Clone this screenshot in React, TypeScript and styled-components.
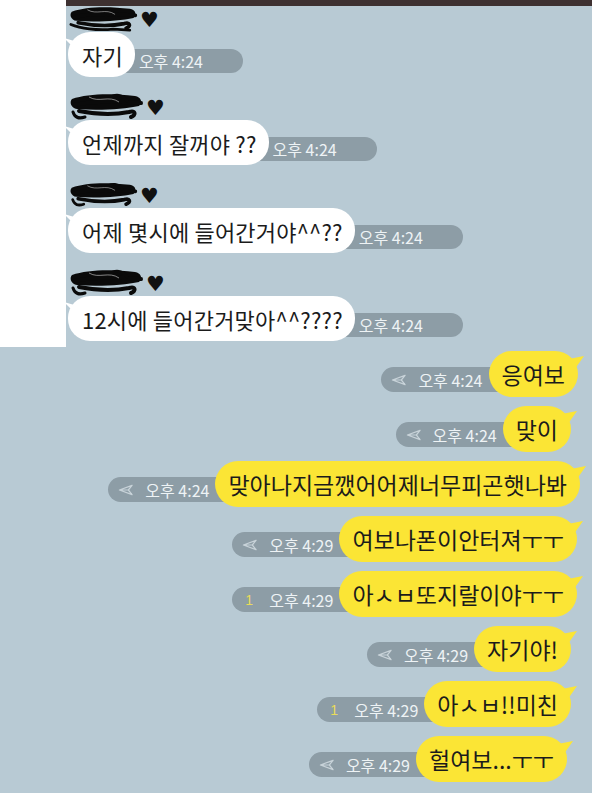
import React from 'react';
import styled, { createGlobalStyle } from 'styled-components';

const GlobalStyle = createGlobalStyle`
  html, body {
    margin: 0;
    padding: 0;
    background: #b8cad4;
  }
  * {
    box-sizing: border-box;
  }
`;

const Screen = styled.div`
  width: 592px;
  height: 793px;
  overflow: hidden;
  background: #b8cad4;
  font-family: 'Noto Sans CJK KR', 'Noto Sans', sans-serif;
  color: #1b1b1b;
`;

const TopArea = styled.div`
  display: flex;
  height: 347px;
`;

const WhiteStrip = styled.div`
  width: 66px;
  flex-shrink: 0;
  background: #fff;
`;

const ReceivedColumn = styled.div`
  flex: 1;
  display: flex;
  flex-direction: column;
`;

const TopBar = styled.div`
  height: 6px;
  background: #3e3131;
`;

const ReceivedList = styled.div`
  display: flex;
  flex-direction: column;
  gap: 17px;
`;

const Group = styled.div`
  display: flex;
  flex-direction: column;
`;

const NameRow = styled.div`
  height: 26px;
  display: flex;
  align-items: center;
  padding-left: 3px;
  gap: 1px;
`;

const Heart = styled.span`
  font-family: 'DejaVu Sans', sans-serif;
  font-size: 21px;
  line-height: 1;
  color: #111;
  margin-top: 2px;
`;

const ReceivedRow = styled.div`
  display: flex;
  align-items: flex-end;
  padding-left: 2px;
`;

const WhiteBubble = styled.div`
  position: relative;
  z-index: 2;
  height: 45px;
  display: flex;
  align-items: center;
  padding: 0 12px 0 14px;
  background: #fff;
  border-radius: 22px;
  font-size: 22px;
  letter-spacing: 0.2px;
  white-space: nowrap;

  &::before {
    content: '';
    position: absolute;
    left: -4px;
    top: 6px;
    width: 12px;
    height: 12px;
    background: #fff;
    clip-path: polygon(0 0, 100% 30%, 100% 100%);
  }
`;

const ReceivedTime = styled.div`
  position: relative;
  z-index: 1;
  height: 24px;
  margin: 0 0 4px -22px;
  padding: 0 40px 0 26px;
  display: flex;
  align-items: center;
  border-radius: 12px;
  background: #8d9da6;
  color: #eef3f5;
  font-size: 16px;
  white-space: nowrap;
`;

const SentList = styled.div`
  display: flex;
  flex-direction: column;
  gap: 9px;
  padding-top: 4px;
`;

const SentRow = styled.div<{ $inset: number }>`
  display: flex;
  justify-content: flex-end;
  align-items: flex-end;
  padding-right: ${(p) => p.$inset}px;
`;

const YellowBubble = styled.div`
  position: relative;
  z-index: 2;
  height: 46px;
  display: flex;
  align-items: center;
  padding: 0 13px;
  background: #fbe535;
  border-radius: 23px;
  font-size: 23px;
  white-space: nowrap;

  &::after {
    content: '';
    position: absolute;
    right: -6px;
    top: 5px;
    width: 14px;
    height: 14px;
    background: #fbe535;
    clip-path: polygon(0 20%, 100% 0, 30% 100%);
  }
`;

const SentTime = styled.div`
  position: relative;
  z-index: 1;
  height: 25px;
  margin: 0 -25px 5px 0;
  padding: 0 31px 0 10px;
  display: flex;
  align-items: center;
  gap: 12px;
  border-radius: 13px;
  background: #8d9da6;
  color: #eef3f5;
  font-size: 16px;
  white-space: nowrap;
`;

const Unread = styled.span`
  width: 15px;
  padding-left: 3px;
  color: #e9dc5a;
  font-family: 'Liberation Sans', sans-serif;
  font-size: 14px;
`;

const Scribble: React.FC<{ seed: number }> = ({ seed }) => {
  const w = 70 + (seed % 2) * 6;
  return (
    <svg width={w} height="28" viewBox="0 0 76 28" style={{ overflow: 'visible' }}>
      <path
        d="M3 6 C 18 1, 40 0, 66 3 C 72 4, 74 9, 70 13 C 55 16, 30 18, 8 16 C 2 15, 0 9, 3 6 Z"
        fill="#0a0a0a"
      />
      <path
        d="M6 12 C 20 8, 45 8, 72 10 M10 18 C 25 21, 45 22, 60 19 C 66 17, 68 22, 62 24"
        stroke="#0a0a0a"
        strokeWidth="4"
        fill="none"
        strokeLinecap="round"
      />
      <path
        d={seed === 0 ? 'M2 20 C 12 24, 30 27, 48 25 L 66 26' : 'M4 19 C 6 25, 10 26, 16 24 M40 6 C 46 0, 54 2, 58 8'}
        stroke="#0a0a0a"
        strokeWidth="3"
        fill="none"
        strokeLinecap="round"
      />
      <path d="M20 4 C 30 10, 40 2, 50 9" stroke="#fff" strokeWidth="1" fill="none" opacity="0.5" />
    </svg>
  );
};

const SendIcon: React.FC = () => (
  <svg width="15" height="12" viewBox="0 0 16 12">
    <path
      d="M15 1 L1.5 6 L15 11 L11 6 Z M1.5 6 L11 6"
      stroke="#c8d3d9"
      strokeWidth="1.3"
      fill="none"
      strokeLinejoin="round"
    />
  </svg>
);

const RECEIVED = [
  { text: '자기', time: '오후 4:24' },
  { text: '언제까지 잘꺼야 ??', time: '오후 4:24' },
  { text: '어제 몇시에 들어간거야^^??', time: '오후 4:24' },
  { text: '12시에 들어간거맞아^^????', time: '오후 4:24' },
];

const SENT = [
  { text: '응여보', time: '오후 4:24', unread: false, inset: 14 },
  { text: '맞이', time: '오후 4:24', unread: false, inset: 21 },
  { text: '맞아나지금깼어어제너무피곤햇나봐', time: '오후 4:24', unread: false, inset: 12 },
  { text: '여보나폰이안터져ㅜㅜ', time: '오후 4:29', unread: false, inset: 15 },
  { text: '아ㅅㅂ또지랄이야ㅜㅜ', time: '오후 4:29', unread: true, inset: 15 },
  { text: '자기야!', time: '오후 4:29', unread: false, inset: 21 },
  { text: '아ㅅㅂ!!미친', time: '오후 4:29', unread: true, inset: 21 },
  { text: '헐여보...ㅜㅜ', time: '오후 4:29', unread: false, inset: 25 },
];

const App: React.FC = () => {
  return (
    <Screen>
      <GlobalStyle />
      <TopArea>
        <WhiteStrip />
        <ReceivedColumn>
          <TopBar />
          <ReceivedList>
            {RECEIVED.map((m, i) => (
              <Group key={i}>
                <NameRow>
                  <Scribble seed={i} />
                  <Heart>♥</Heart>
                </NameRow>
                <ReceivedRow>
                  <WhiteBubble>{m.text}</WhiteBubble>
                  <ReceivedTime>{m.time}</ReceivedTime>
                </ReceivedRow>
              </Group>
            ))}
          </ReceivedList>
        </ReceivedColumn>
      </TopArea>
      <SentList>
        {SENT.map((m, i) => (
          <SentRow key={i} $inset={m.inset}>
            <SentTime>
              {m.unread ? <Unread>1</Unread> : <SendIcon />}
              <span>{m.time}</span>
            </SentTime>
            <YellowBubble>{m.text}</YellowBubble>
          </SentRow>
        ))}
      </SentList>
    </Screen>
  );
};

export default App;
